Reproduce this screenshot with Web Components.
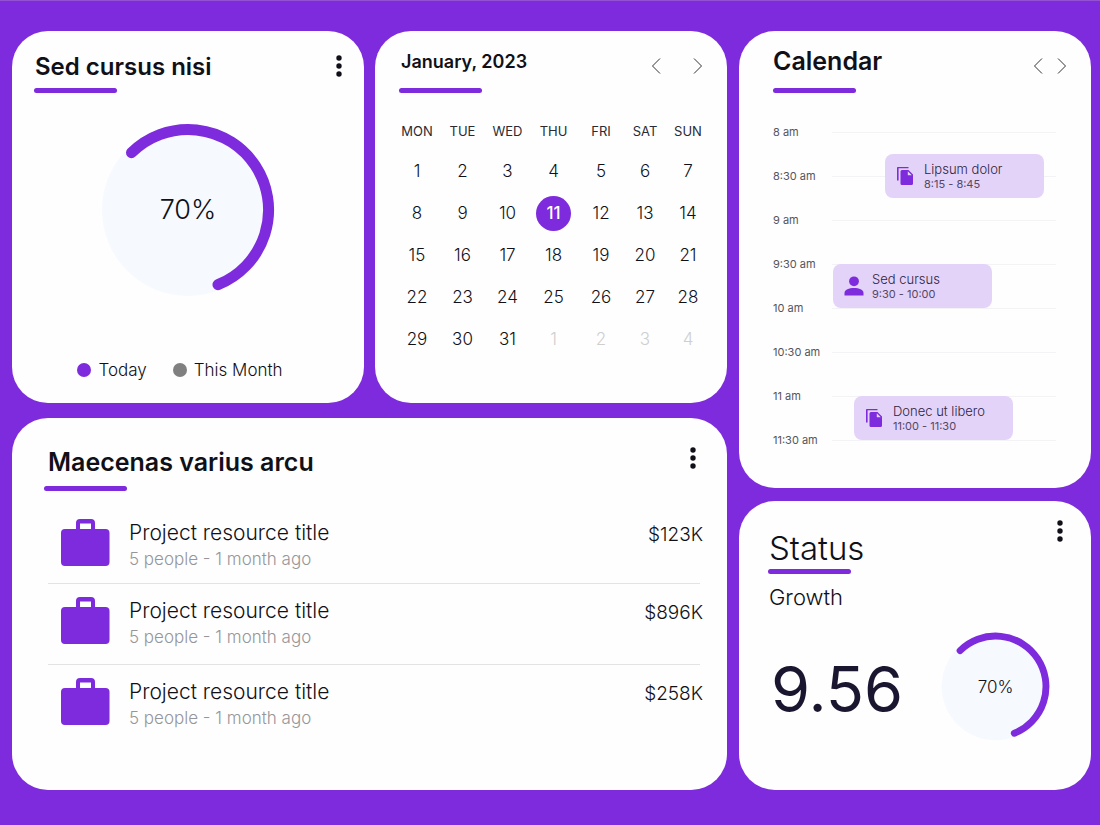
<!DOCTYPE html>
<html lang="en">
<head>
<meta charset="utf-8">
<meta name="viewport" content="width=device-width, initial-scale=1">
<title>Dashboard</title>
<style>
  html { --accent: #7d2bdc; --ink: #101018; }
  body {
    margin: 0;
    background: var(--accent);
    color: var(--ink);
    font-family: Inter, "Open Sans", sans-serif;
    font-weight: 300;
  }
</style>
</head>
<body>
<dash-board></dash-board>

<script>
const define = (name, html, setup) => {
  const tpl = document.createElement('template');
  tpl.innerHTML = html;
  customElements.define(name, class extends HTMLElement {
    constructor() {
      super();
      this.attachShadow({ mode: 'open' }).append(tpl.content.cloneNode(true));
    }
    connectedCallback() { if (setup) setup(this, this.shadowRoot); }
  });
};

/* White panel: title with an accent bar, actions on the right, body below */
define('dash-card', `
  <style>
    :host { display: flex; flex-direction: column; background: #fefefe; border-radius: 36px; min-width: 0; }
    header { display: flex; justify-content: space-between; align-items: flex-start; padding-right: var(--actions-right, 17px); }
    .head { padding: var(--title-top, 18px) 0 0 var(--bar-left, 22px); }
    h2 { margin: 0 0 var(--bar-gap, 3px) var(--title-indent, 1px); font-size: var(--title-size, 24px); line-height: var(--title-line, 36px); font-weight: var(--title-weight, 600); white-space: nowrap; }
    .bar { width: 83px; height: 5px; border-radius: 3px; background: var(--accent); }
    .actions { display: flex; gap: var(--actions-gap, 0px); margin-top: var(--actions-top, 21px); }
  </style>
  <header>
    <div class="head"><h2><slot name="title"></slot></h2><div class="bar"></div></div>
    <div class="actions"><slot name="actions"></slot></div>
  </header>
  <slot></slot>`);

define('kebab-button', `
  <style>
    :host { display: block; }
    button { display: block; width: 28px; height: 28px; margin: 0; padding: 0; border: 0; background: none; color: inherit; cursor: pointer; }
    svg { display: block; }
  </style>
  <button type="button" aria-label="More options">
    <svg width="28" height="28" viewBox="0 0 28 28" fill="currentColor"><circle cx="14" cy="6" r="2.7"/><circle cx="14" cy="14" r="2.7"/><circle cx="14" cy="22" r="2.7"/></svg>
  </button>`);

define('nav-button', `
  <style>
    :host { display: block; }
    button { display: block; width: 24px; height: 28px; margin: 0; padding: 0; border: 0; background: none; color: #33333a; cursor: pointer; }
    :host([direction="next"]) svg { transform: scaleX(-1); }
    svg { display: block; }
  </style>
  <button type="button">
    <svg width="24" height="28" viewBox="0 0 24 28" fill="none" stroke="currentColor" stroke-width="1"><path d="M16 6.5 8.5 14l7.5 7.5"/></svg>
  </button>`, (el, root) => {
  root.querySelector('button').setAttribute('aria-label', el.getAttribute('direction') === 'next' ? 'Next' : 'Previous');
});

define('progress-ring', `
  <style>
    :host { display: grid; place-items: center; width: var(--ring, 174px); font-size: var(--ring-text, 27px); line-height: 36px; }
    svg { display: block; width: 100%; grid-area: 1 / 1; }
    span { grid-area: 1 / 1; }
  </style>
  <svg viewBox="-87 -87 174 174" aria-hidden="true">
    <circle r="86" fill="#f6f9fe"/>
    <path d="M-56.500 -57.300A80.500 80.500 0 1 1 30 74.700" fill="none" stroke="var(--accent)" stroke-width="11" stroke-linecap="round"/>
  </svg>
  <span><slot></slot></span>`);

define('legend-item', `
  <style>
    :host { display: flex; align-items: center; gap: 7px; font-size: 17px; line-height: 24px; white-space: nowrap; }
    i { width: 14px; height: 14px; border-radius: 50%; background: var(--dot, var(--accent)); }
  </style>
  <i></i><slot></slot>`);

define('month-calendar', `
  <style>
    :host { display: block; }
    table { width: 100%; table-layout: fixed; border-collapse: collapse; text-align: center; }
    th { height: 38px; padding: 0; font-size: 13px; line-height: 20px; font-weight: 400; color: #2a2a33; }
    td { height: 42px; padding: 0; font-size: 17px; line-height: 24px; }
    td.out { color: #cfcfcf; }
    td.today span { display: block; width: 35px; margin: 0 auto; line-height: 35px; border-radius: 50%; background: var(--accent); color: #fff; font-weight: 500; }
  </style>
  <table>
    <colgroup></colgroup>
    <thead><tr></tr></thead>
    <tbody></tbody>
  </table>`, (el, root) => {
  const widths = [46, 45, 45, 47, 48, 40, 46];
  root.querySelector('colgroup').innerHTML = widths.map(w => `<col style="width:${w / 3.17}%">`).join('');
  root.querySelector('thead tr').innerHTML = ['MON', 'TUE', 'WED', 'THU', 'FRI', 'SAT', 'SUN'].map(d => `<th scope="col">${d}</th>`).join('');
  const today = Number(el.getAttribute('today')), days = Number(el.getAttribute('days'));
  let rows = '';
  for (let w = 0; w < 5; w++) {
    rows += '<tr>';
    for (let d = 1; d <= 7; d++) {
      const n = w * 7 + d;
      const cls = n > days ? 'out' : n === today ? 'today' : '';
      rows += `<td class="${cls}"><span>${n > days ? n - days : n}</span></td>`;
    }
    rows += '</tr>';
  }
  root.querySelector('tbody').innerHTML = rows;
});

/* Day schedule on quarter-hour grid rows; slotted events set their own start row */
define('day-agenda', `
  <style>
    :host { display: grid; grid-template-columns: 59px 1fr; grid-auto-rows: 22px; }
    .time { grid-column: 1; align-self: center; font-size: 11px; line-height: 16px; color: #55555c; white-space: nowrap; font-weight: 400; }
    .line { grid-column: 2; align-self: center; height: 1px; background: #f3f3f5; }
  </style>
  <slot></slot>`, (el, root) => {
  const slot = root.querySelector('slot');
  el.getAttribute('hours').split(',').forEach((t, i) => {
    for (const cls of ['time', 'line']) {
      const div = document.createElement('div');
      div.className = cls;
      div.style.gridRow = `${i * 2 + 1} / span 2`;
      if (cls === 'time') div.textContent = t;
      slot.before(div);
    }
  });
});

define('agenda-event', `
  <style>
    :host { display: flex; align-items: center; gap: 8px; box-sizing: border-box; grid-column: 2; justify-self: start; width: 159px; padding-left: 11px; border-radius: 8px; background: #e3d3f9; color: #2e2342; }
    svg { display: none; width: 20px; height: 20px; fill: var(--accent); flex: none; }
    :host([icon="files"]) .files, :host([icon="person"]) .person { display: block; }
    .title { font-size: 13px; line-height: 16px; white-space: nowrap; }
    .when { font-size: 11px; line-height: 14px; font-weight: 400; color: #544767; white-space: nowrap; }
  </style>
  <svg class="files" viewBox="0 0 20 20" aria-hidden="true"><path d="M1 1.800Q1 1 1.800 1H12.500V2.300H2.600V14.500H1z"/><path fill-rule="evenodd" d="M6 4h6.500L17 8.500V17.500Q17 19 15.500 19H6Q4.500 19 4.500 17.500V5.500Q4.500 4 6 4zM11.800 5.200V9.200H15.800z"/></svg>
  <svg class="person" viewBox="0 0 20 20" aria-hidden="true"><circle cx="10" cy="5.300" r="4.900"/><path d="M.5 19.500V17C.5 13.500 5 12 10 12s9.500 1.500 9.500 5v2.500z"/></svg>
  <div><div class="title"><slot></slot></div><div class="when"><slot name="when"></slot></div></div>`);

define('project-row', `
  <style>
    :host { display: grid; grid-template-columns: 50px 1fr auto; column-gap: 19px; align-items: start; padding: 13px 0 13px 12px; border-bottom: 1px solid #e3e3e5; }
    :host(:first-of-type) { padding-bottom: 10px; }
    :host(:last-of-type) { border-bottom: 0; }
    svg { display: block; fill: var(--accent); }
    .title { font-size: 21px; line-height: 27px; }
    .meta { font-size: 17px; line-height: 27px; color: #96969a; }
    .price { font-size: 19px; line-height: 31px; margin-right: -3px; }
  </style>
  <svg width="50" height="47" viewBox="0 0 50 47" aria-hidden="true"><path fill-rule="evenodd" d="M16 10V4Q16 0 20 0h11q4 0 4 4v6h10.500q4 0 4 4V43q0 4-4 4H5q-4 0-4-4V14q0-4 4-4zM20 10H31V4.500H20z"/></svg>
  <div><div class="title"><slot></slot></div><div class="meta"><slot name="meta"></slot></div></div>
  <div class="price"><slot name="price"></slot></div>`);

define('dash-board', `
  <style>
    :host { display: grid; grid-template-columns: minmax(0, 715fr) minmax(0, 352fr); gap: 12px; box-sizing: border-box; min-height: 100vh; padding: 30px 9px 35px 12px; border-top: 1px solid #9352d6; }
    .main { display: grid; grid-template-columns: repeat(2, minmax(0, 1fr)); grid-template-rows: 1fr 1fr; gap: 15px 11px; }
    .side { display: grid; grid-template-rows: 457fr 289fr; gap: 13px; }
    .usage { --actions-right: 11px; }
    .month { --title-top: 17px; --title-size: 18px; --title-line: 28px; --bar-gap: 12px; --bar-left: 24px; --title-indent: 2px; --actions-gap: 18px; }
    .projects { grid-column: 1 / -1; --title-size: 25px; --title-top: 26px; --bar-gap: 6px; --bar-left: 32px; --title-indent: 4px; --actions-top: 26px; --actions-right: 20px; }
    .agenda { --title-size: 25px; --title-top: 12px; --bar-gap: 9px; --bar-left: 34px; --title-indent: 0px; }
    .status { --title-top: 27px; --title-size: 33px; --title-line: 40px; --title-weight: 300; --bar-gap: 1px; --bar-left: 29px; --actions-top: 16px; }
    .usage progress-ring { margin: 30px auto 0; }
    .legend { display: flex; justify-content: center; gap: 26px; margin-top: auto; padding: 16px 16px 21px 0; }
    .gray { --dot: #808080; }
    month-calendar { margin: 19px 16px 24px 19px; }
    day-agenda { margin: 17px 35px 24px 34px; }
    .list { margin: 15px 27px 24px 36px; }
    .status p { margin: 9px 30px 0; font-size: 22px; line-height: 28px; }
    .growth { display: flex; align-items: center; justify-content: space-between; margin: 21px 41px 24px 32px; }
    .growth strong { padding-top: 4px; font-size: 63px; line-height: 80px; font-weight: 400; color: #1b1630; }
    .growth progress-ring { --ring: 109px; --ring-text: 17px; }
  </style>
  <main class="main">
    <dash-card class="usage">
      <span slot="title">Sed cursus nisi</span>
      <kebab-button slot="actions"></kebab-button>
      <progress-ring>70%</progress-ring>
      <div class="legend"><legend-item>Today</legend-item><legend-item class="gray">This Month</legend-item></div>
    </dash-card>
    <dash-card class="month">
      <span slot="title">January, 2023</span>
      <nav-button slot="actions" direction="prev"></nav-button>
      <nav-button slot="actions" direction="next"></nav-button>
      <month-calendar days="31" today="11"></month-calendar>
    </dash-card>
    <dash-card class="projects">
      <span slot="title">Maecenas varius arcu</span>
      <kebab-button slot="actions"></kebab-button>
      <div class="list">
        <project-row>Project resource title<span slot="meta">5 people - 1 month ago</span><span slot="price">$123K</span></project-row>
        <project-row>Project resource title<span slot="meta">5 people - 1 month ago</span><span slot="price">$896K</span></project-row>
        <project-row>Project resource title<span slot="meta">5 people - 1 month ago</span><span slot="price">$258K</span></project-row>
      </div>
    </dash-card>
  </main>
  <aside class="side">
    <dash-card class="agenda">
      <span slot="title">Calendar</span>
      <nav-button slot="actions" direction="prev"></nav-button>
      <nav-button slot="actions" direction="next"></nav-button>
      <day-agenda hours="8 am,8:30 am,9 am,9:30 am,10 am,10:30 am,11 am,11:30 am">
        <agenda-event icon="files" style="grid-row: 3 / span 2; margin-left: 53px">Lipsum dolor<span slot="when">8:15 - 8:45</span></agenda-event>
        <agenda-event icon="person" style="grid-row: 8 / span 2; margin-left: 1px">Sed cursus<span slot="when">9:30 - 10:00</span></agenda-event>
        <agenda-event icon="files" style="grid-row: 14 / span 2; margin-left: 22px">Donec ut libero<span slot="when">11:00 - 11:30</span></agenda-event>
      </day-agenda>
    </dash-card>
    <dash-card class="status">
      <span slot="title">Status</span>
      <kebab-button slot="actions"></kebab-button>
      <p>Growth</p>
      <div class="growth"><strong>9.56</strong><progress-ring>70%</progress-ring></div>
    </dash-card>
  </aside>`);
</script>
</body>
</html>
